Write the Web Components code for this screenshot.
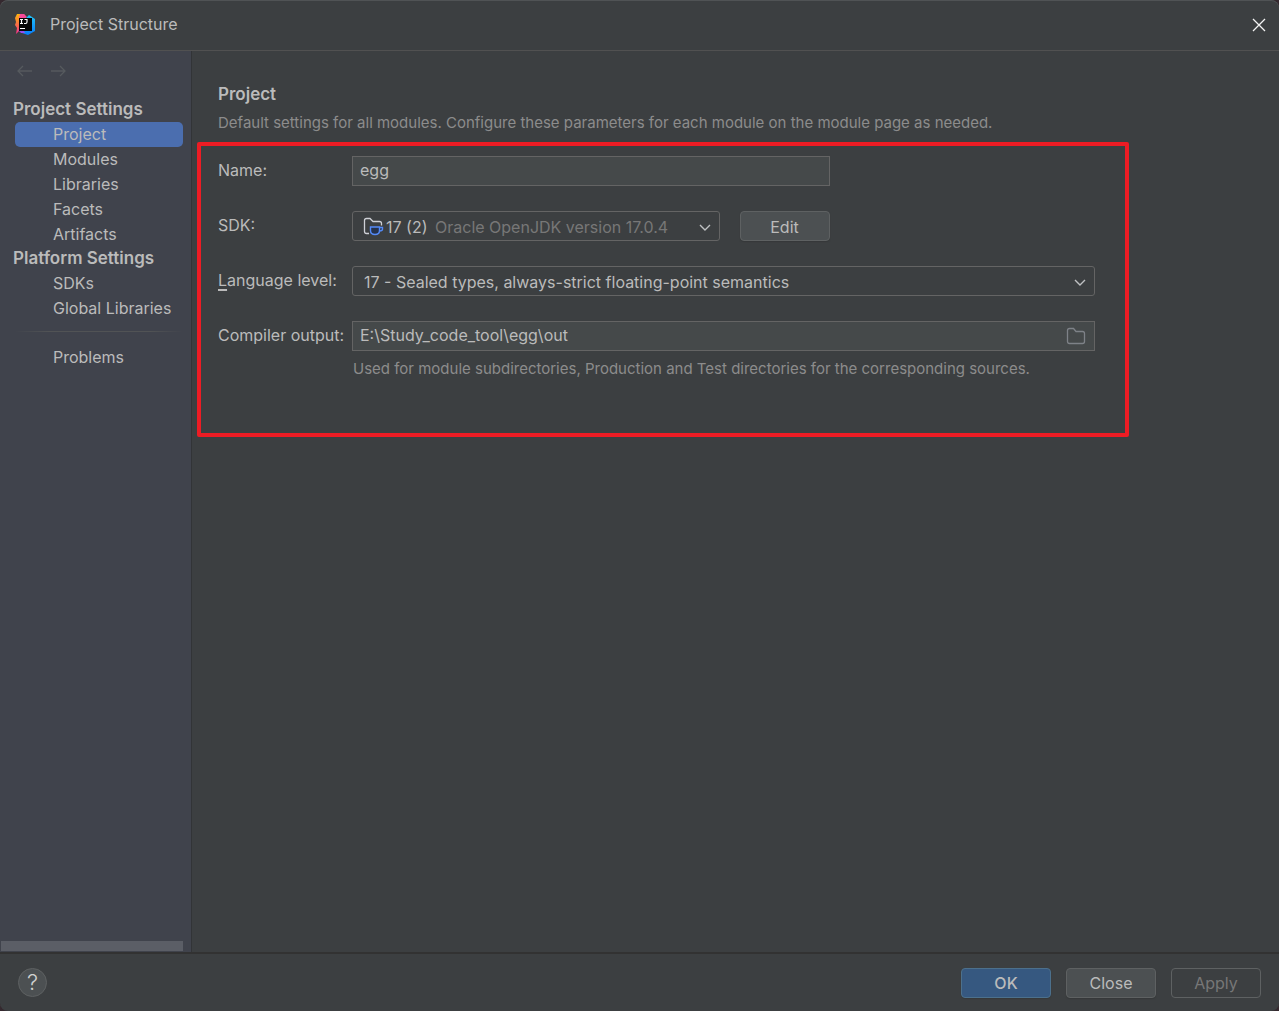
<!DOCTYPE html>
<html lang="en">
<head>
<meta charset="utf-8">
<title>Project Structure</title>
<style>
  html, body { height: 100%; margin: 0; }
  body {
    background: #35292f;
    color: #bbbbbb;
    font: 16px/24px Inter, "Liberation Sans", sans-serif;
  }
</style>
</head>
<body>
<project-dialog></project-dialog>

<script>
const define = (name, html, setup) => {
  const template = document.createElement('template');
  template.innerHTML = html;
  customElements.define(name, class extends HTMLElement {
    constructor() {
      super();
      this.attachShadow({ mode: 'open' }).append(template.content.cloneNode(true));
    }
    connectedCallback() { if (setup) setup(this, this.shadowRoot); }
  });
};

/* Title bar: logo, caption, close button */
define('title-bar', `
<style>
  :host { display: flex; align-items: center; height: 51px; box-sizing: border-box; padding: 0 13px 0 14px; border-bottom: 1px solid #515151; }
  h1 { flex: 1; margin: 0 0 2px 14px; font: inherit; }
  button { display: flex; padding: 0; border: 0; background: none; }
  svg { display: block; }
</style>
<svg width="22" height="22" viewBox="0 0 22 22" aria-hidden="true">
  <defs>
    <linearGradient id="warm" x1="0" y1="0" x2="0" y2="1">
      <stop offset="0" stop-color="#fdb60d"/><stop offset=".45" stop-color="#f97a3c"/><stop offset="1" stop-color="#fe2d8c"/>
    </linearGradient>
    <linearGradient id="cool" x1="0" y1="0" x2="0" y2="1">
      <stop offset="0" stop-color="#22c4f5"/><stop offset="1" stop-color="#087cfa"/>
    </linearGradient>
  </defs>
  <path d="M1 4 3 0h7l2 4-1 12-6 1-3 3 1-6-2-3 1-3z" fill="url(#warm)"/>
  <path d="M6 0h4l3 3-4 3-4-2z" fill="#f94a9a"/>
  <path d="M12 4l3-3 6 4v12l-7 4-6-2 1-3 5-1z" fill="url(#cool)"/>
  <path d="M4 16l5-1 2 4-4 0z" fill="#9a4cf0"/>
  <path d="M5 4h13v13H5z" fill="#070707"/>
  <path d="M6 5.500h3M7.500 5.500v4M6 9.500h3M10.500 5.500h2.500v2.500q0 1.500-1.500 1.500h-1.500M6 14.500h5" fill="none" stroke="#fff" stroke-width="1.200"/>
</svg>
<h1>Project Structure</h1>
<button type="button" aria-label="Close window">
  <svg width="14" height="14" viewBox="0 0 14 14"><path d="M1 1l12 12M13 1L1 13" stroke="#f4f4f4" stroke-width="1.300"/></svg>
</button>
`);

/* One entry in the side list */
define('nav-item', `
<style>
  :host { display: block; }
  a { display: block; height: 25px; line-height: 25px; padding-left: 38px; border-radius: 5px; color: inherit; text-decoration: none; white-space: nowrap; }
  :host([selected]) a { background: #4b6eaf; }
</style>
<a href="#"><slot></slot></a>
`, (host, root) => {
  if (host.hasAttribute('selected')) root.querySelector('a').setAttribute('aria-current', 'page');
});

define('side-panel', `
<style>
  :host { display: flex; flex-direction: column; width: 191px; flex: none; background: #40434c; border-right: 1px solid #323437; }
  .history { display: flex; gap: 16px; padding: 11px 16px 18px; }
  button { display: flex; padding: 0; border: 0; background: none; height: 18px; }
  svg { display: block; }
  nav { flex: 1; padding: 0 8px 0 15px; }
  h2 { margin: 0 0 0 -2px; padding-bottom: 2px; font-size: 17px; line-height: 22px; font-weight: 600; white-space: nowrap; }
  hr { height: 1px; margin: 10px 0 13px; border: 0; background: linear-gradient(90deg, transparent, #515355 20%, #515355 80%, transparent); }
  .scroll { height: 10px; margin: 0 8px 1px 1px; background: #5b5e66; }
</style>
<div class="history">
  <button type="button" disabled aria-label="Back"><svg width="18" height="18" viewBox="0 0 18 18"><path d="M16 9H2M7 4L2 9l5 5" fill="none" stroke="#565a5e" stroke-width="1.300"/></svg></button>
  <button type="button" disabled aria-label="Forward"><svg width="18" height="18" viewBox="0 0 18 18"><path d="M1 9h14M10 4l5 5-5 5" fill="none" stroke="#565a5e" stroke-width="1.300"/></svg></button>
</div>
<nav aria-label="Sections">
  <h2>Project Settings</h2>
  <nav-item selected>Project</nav-item>
  <nav-item>Modules</nav-item>
  <nav-item>Libraries</nav-item>
  <nav-item>Facets</nav-item>
  <nav-item>Artifacts</nav-item>
  <h2>Platform Settings</h2>
  <nav-item>SDKs</nav-item>
  <nav-item>Global Libraries</nav-item>
  <hr>
  <nav-item>Problems</nav-item>
</nav>
<div class="scroll"></div>
`);

/* Push button: default, primary or disabled */
define('push-button', `
<style>
  :host { display: block; flex: none; }
  button { display: block; width: 90px; height: 30px; padding: 1px 0 0; border: 1px solid #5e6162; border-radius: 4px; background: #4c5052; color: #bbbbbb; font: inherit; line-height: 24px; box-shadow: 0 1px 1px #36383a; }
  :host([primary]) button { background: #365880; border-color: #4c708c; font-weight: 500; }
  button:disabled { background: none; color: #777777; box-shadow: none; }
</style>
<button type="button"><slot></slot></button>
`, (host, root) => { root.querySelector('button').disabled = host.hasAttribute('disabled'); });

define('project-form', `
<style>
  :host { display: block; margin: 0 150px 0 5px; padding: 10px 30px 52px 17px; border: 4px solid #ed1c24; border-radius: 2px; }
  form { display: grid; grid-template-columns: 134px minmax(0, 1fr); row-gap: 25px; }
  label { line-height: 29px; height: 30px; white-space: nowrap; }
  u { text-underline-offset: 3px; text-decoration-thickness: 2px; }
  .half { width: calc(64% + 2px); }
  .line { display: flex; gap: 20px; }
  .box { display: grid; flex: 1; grid-template: 30px / minmax(0, 1fr); align-items: center; min-width: 0; }
  .box > * { grid-area: 1 / 1; }
  .box > svg { justify-self: end; pointer-events: none; }
  .chevron { margin-right: 8px; }
  .box > .sdk { justify-self: start; margin-left: 11px; }
  .version { padding: 1px 0 0 83px; color: #777777; pointer-events: none; white-space: nowrap; overflow: hidden; }
  .folder { margin-right: 9px; }
  input, select { box-sizing: border-box; width: 100%; height: 30px; margin: 0; border: 1px solid #646464; color: #bbbbbb; font: inherit; outline: 0; }
  input { padding: 0 36px 2px 7px; background: #45494a; }
  select { appearance: none; padding: 1px 30px 0 11px; border-radius: 3px; background: #3c3f41; }
  .jdk { padding-left: 33px; }
  p { margin: 6px 0 0 1px; font-size: 15px; color: #8c8c8c; white-space: nowrap; }
</style>
<form>
  <label for="name">Name:</label>
  <div class="half"><input id="name" type="text" value="egg"></div>

  <label for="sdk">SDK:</label>
  <div class="line half">
    <div class="box">
      <select id="sdk" class="jdk"><option>17 (2)</option></select>
      <span class="version">Oracle OpenJDK version 17.0.4</span>
      <svg class="sdk" width="22" height="20" viewBox="0 0 22 20" aria-hidden="true">
        <path d="M6 17.500H3.500Q1.500 17.500 1.500 15.500v-11Q1.500 2.500 3.500 2.500h3.500l3 3h6.500q2 0 2 2v2" fill="none" stroke="#ced0d6" stroke-width="1.300"/>
        <path d="M7.500 11h9v3.500q0 4-4.500 4t-4.500-4zM16.500 11.500h3v1.500q0 2-3 2" fill="#25324d" stroke="#548af7" stroke-width="1.400"/>
      </svg>
      <svg class="chevron" width="14" height="14" viewBox="0 0 14 14" aria-hidden="true"><path d="M2 6l5 5 5-5" fill="none" stroke="#bfc1c3" stroke-width="1.400"/></svg>
    </div>
    <push-button>Edit</push-button>
  </div>

  <label for="level"><u>L</u>anguage level:</label>
  <div class="box">
    <select id="level"><option>17 - Sealed types, always-strict floating-point semantics</option></select>
    <svg class="chevron" width="14" height="14" viewBox="0 0 14 14" aria-hidden="true"><path d="M2 6l5 5 5-5" fill="none" stroke="#bfc1c3" stroke-width="1.400"/></svg>
  </div>

  <label for="output">Compiler output:</label>
  <div>
    <div class="box">
      <input id="output" type="text" value="E:\\Study_code_tool\\egg\\out">
      <svg class="folder" width="20" height="18" viewBox="0 0 20 18" aria-hidden="true"><path d="M1.500 14.500v-11q0-2 2-2h4l2.500 3h6.500q2 0 2 2v8q0 2-2 2h-13q-2 0-2-2z" fill="none" stroke="#7e8288" stroke-width="1.300"/></svg>
    </div>
    <p>Used for module subdirectories, Production and Test directories for the corresponding sources.</p>
  </div>
</form>
`);

define('project-page', `
<style>
  :host { display: block; flex: 1; min-width: 0; padding-top: 31px; }
  header { padding: 0 26px 7px; }
  h2 { margin: 0; font-size: 17px; line-height: 24px; font-weight: 600; }
  p { margin: 5px 0 0; font-size: 15px; color: #8c8c8c; }
</style>
<header>
  <h2>Project</h2>
  <p>Default settings for all modules. Configure these parameters for each module on the module page as needed.</p>
</header>
<project-form></project-form>
`);

define('dialog-footer', `
<style>
  :host { display: flex; align-items: center; gap: 15px; height: 59px; box-sizing: border-box; padding: 0 18px; border-top: 2px solid #323232; }
  .help { width: 29px; height: 29px; margin-right: auto; padding: 0; border: 1px solid #5e6162; border-radius: 50%; background: #4c5052; color: #d0d0d0; font: 300 22px/27px Inter, sans-serif; }
</style>
<button class="help" type="button" aria-label="Help">?</button>
<push-button primary>OK</push-button>
<push-button>Close</push-button>
<push-button disabled>Apply</push-button>
`);

define('project-dialog', `
<style>
  :host { display: flex; flex-direction: column; min-height: 100vh; box-sizing: border-box; background: #3c3f41; border-radius: 8px; box-shadow: inset 0 1px #505355; overflow: hidden; }
  main { display: flex; flex: 1; }
</style>
<title-bar></title-bar>
<main>
  <side-panel></side-panel>
  <project-page></project-page>
</main>
<dialog-footer></dialog-footer>
`);
</script>
</body>
</html>
